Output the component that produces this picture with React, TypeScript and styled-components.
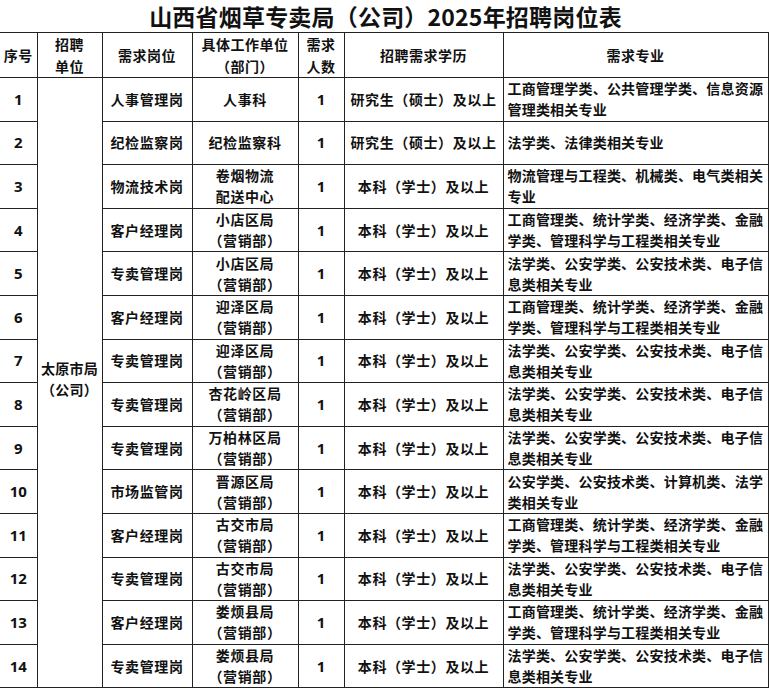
import styled, { createGlobalStyle } from 'styled-components'

// types
interface Job {
  no: number
  post: string
  unit: string[]
  count: number
  edu: string
  major: string
}

interface CellProps {
  $align?: 'left' | 'center'
}

// data
const jobs: Job[] = [
  { no: 1, post: '人事管理岗', unit: ['人事科'], count: 1, edu: '研究生（硕士）及以上', major: '工商管理学类、公共管理学类、信息资源管理类相关专业' },
  { no: 2, post: '纪检监察岗', unit: ['纪检监察科'], count: 1, edu: '研究生（硕士）及以上', major: '法学类、法律类相关专业' },
  { no: 3, post: '物流技术岗', unit: ['卷烟物流', '配送中心'], count: 1, edu: '本科（学士）及以上', major: '物流管理与工程类、机械类、电气类相关专业' },
  { no: 4, post: '客户经理岗', unit: ['小店区局', '（营销部）'], count: 1, edu: '本科（学士）及以上', major: '工商管理类、统计学类、经济学类、金融学类、管理科学与工程类相关专业' },
  { no: 5, post: '专卖管理岗', unit: ['小店区局', '（营销部）'], count: 1, edu: '本科（学士）及以上', major: '法学类、公安学类、公安技术类、电子信息类相关专业' },
  { no: 6, post: '客户经理岗', unit: ['迎泽区局', '（营销部）'], count: 1, edu: '本科（学士）及以上', major: '工商管理类、统计学类、经济学类、金融学类、管理科学与工程类相关专业' },
  { no: 7, post: '专卖管理岗', unit: ['迎泽区局', '（营销部）'], count: 1, edu: '本科（学士）及以上', major: '法学类、公安学类、公安技术类、电子信息类相关专业' },
  { no: 8, post: '专卖管理岗', unit: ['杏花岭区局', '（营销部）'], count: 1, edu: '本科（学士）及以上', major: '法学类、公安学类、公安技术类、电子信息类相关专业' },
  { no: 9, post: '专卖管理岗', unit: ['万柏林区局', '（营销部）'], count: 1, edu: '本科（学士）及以上', major: '法学类、公安学类、公安技术类、电子信息类相关专业' },
  { no: 10, post: '市场监管岗', unit: ['晋源区局', '（营销部）'], count: 1, edu: '本科（学士）及以上', major: '公安学类、公安技术类、计算机类、法学类相关专业' },
  { no: 11, post: '客户经理岗', unit: ['古交市局', '（营销部）'], count: 1, edu: '本科（学士）及以上', major: '工商管理类、统计学类、经济学类、金融学类、管理科学与工程类相关专业' },
  { no: 12, post: '专卖管理岗', unit: ['古交市局', '（营销部）'], count: 1, edu: '本科（学士）及以上', major: '法学类、公安学类、公安技术类、电子信息类相关专业' },
  { no: 13, post: '客户经理岗', unit: ['娄烦县局', '（营销部）'], count: 1, edu: '本科（学士）及以上', major: '工商管理类、统计学类、经济学类、金融学类、管理科学与工程类相关专业' },
  { no: 14, post: '专卖管理岗', unit: ['娄烦县局', '（营销部）'], count: 1, edu: '本科（学士）及以上', major: '法学类、公安学类、公安技术类、电子信息类相关专业' },
]

const widths = [37, 65, 90, 106, 46, 159, 265]

// styled components
const GlobalStyle = createGlobalStyle`
  body {
    margin: 0;
    background: #fff;
    font-family: "Noto Sans CJK SC", "Noto Sans", sans-serif;
    color: #111;
  }
`

const Page = styled.div`
  width: 771px;
  height: 689px;
  overflow: hidden;
`

const Title = styled.h1`
  margin: 0;
  height: 32px;
  font-size: 23px;
  font-weight: 700;
  line-height: 32px;
  text-align: center;
  letter-spacing: 0.2px;
`

const Table = styled.table`
  border-collapse: collapse;
  table-layout: fixed;
  width: 768px;
  font-weight: 700;
  font-size: 14px;
`

const HeadRow = styled.tr`
  height: 44px;
`

const Row = styled.tr`
  height: 43.6px;
`

const Th = styled.th`
  border: 1.5px solid #222;
  padding: 0 1px;
  font-size: 14px;
  font-weight: 700;
  line-height: 22px;
  letter-spacing: 0.5px;
  &:first-child {
    border-left: none;
  }
`

const Td = styled.td<CellProps>`
  border: 1.5px solid #222;
  padding: ${(p) => (p.$align === 'left' ? '0 1px 0 4px' : '0 1px')};
  line-height: 21px;
  letter-spacing: ${(p) => (p.$align === 'left' ? '0.2px' : '0.6px')};
  text-align: ${(p) => p.$align ?? 'center'};
  vertical-align: middle;
  &:first-child {
    border-left: none;
  }
`

const CityCell = styled(Td)`
  letter-spacing: 0.2px;
  padding: 0 0 8px;
`

const Num = styled.span`
  font-family: "Noto Sans", sans-serif;
  font-size: 15px;
  letter-spacing: 0;
`

const Line = styled.div`
  white-space: nowrap;
`

export default function App() {
  return (
    <Page>
      <GlobalStyle />
      <Title>山西省烟草专卖局（公司）2025年招聘岗位表</Title>
      <Table>
        <colgroup>
          {widths.map((w, i) => (
            <col key={i} style={{ width: w }} />
          ))}
        </colgroup>
        <thead>
          <HeadRow>
            <Th>序号</Th>
            <Th>
              <Line>招聘</Line>
              <Line>单位</Line>
            </Th>
            <Th>需求岗位</Th>
            <Th>
              <Line>具体工作单位</Line>
              <Line>（部门）</Line>
            </Th>
            <Th>
              <Line>需求</Line>
              <Line>人数</Line>
            </Th>
            <Th>招聘需求学历</Th>
            <Th>需求专业</Th>
          </HeadRow>
        </thead>
        <tbody>
          {jobs.map((j, i) => (
            <Row key={j.no}>
              <Td>
                <Num>{j.no}</Num>
              </Td>
              {i === 0 && (
                <CityCell rowSpan={jobs.length}>
                  <Line>太原市局</Line>
                  <Line>（公司）</Line>
                </CityCell>
              )}
              <Td>{j.post}</Td>
              <Td>
                {j.unit.map((u) => (
                  <Line key={u}>{u}</Line>
                ))}
              </Td>
              <Td>
                <Num>{j.count}</Num>
              </Td>
              <Td>{j.edu}</Td>
              <Td $align="left">{j.major}</Td>
            </Row>
          ))}
        </tbody>
      </Table>
    </Page>
  )
}
